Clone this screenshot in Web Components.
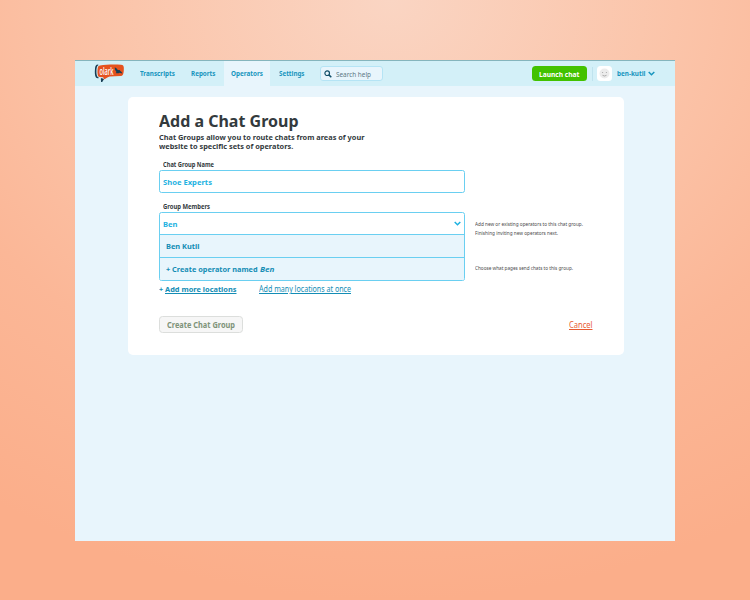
<!DOCTYPE html>
<html lang="en">
<head>
<meta charset="utf-8">
<title>Add a Chat Group</title>
<style>
html,body{margin:0;height:100%}
body{font-family:"Noto Sans","Open Sans",sans-serif;overflow:hidden}
</style>
</head>
<body>
<ol-app></ol-app>
<script>
const define = (name, html, ready) => customElements.define(name, class extends HTMLElement {
  connectedCallback() {
    if (this.shadowRoot) return;
    const t = document.createElement('template');
    t.innerHTML = html;
    this.attachShadow({mode:'open'}).appendChild(t.content.cloneNode(true));
    if (ready) ready(this);
  }
});

/* Text condensed so that its longest line spans the width given in "w". */
define('ol-text', `<style>
:host{display:block;white-space:pre;flex:none;line-height:10px}
span{display:inline-block;vertical-align:top;transform-origin:0 50%}
:host([u]) span{text-decoration:underline;text-underline-offset:1px;text-decoration-thickness:.7px}
</style><span><slot></slot></span>`, el => {
  el.style.fontSize = el.getAttribute('size') + 'px';
  const w = +el.getAttribute('w'), span = el.shadowRoot.querySelector('span');
  const natural = span.getBoundingClientRect().width;
  span.style.transform = 'scaleX(' + w / natural + ')';
  el.style.width = w + 'px';
});

define('ol-chevron', `<style>:host{display:block;flex:none;width:7px;height:5px}svg{display:block}</style>
<svg width="7" height="5" viewBox="0 0 7 5" fill="none" stroke="currentColor" stroke-width="1.5"><path d="M.7 1 3.5 3.700 6.300 1"/></svg>`);

define('ol-logo', `<style>:host{display:block;width:31px;height:19px;flex:none}svg{display:block}</style>
<svg width="31" height="19" viewBox="0 0 31 19">
<path d="M4.200.6C1.600.8 1.200 2.200 1 4.800c-.4 3-.2 7 .8 8.500.5.8 1.500 1 2.800 1z" fill="#173d55"/>
<path d="M4.600 1C3.100 1.700 2.700 3 2.500 5c-.2 2.600-.1 6 .7 7.600l1.800.8z" fill="#d4f0f8"/>
<path d="M7.300 14.600l.3 3.400 1.900-2.700z" fill="#173d55" stroke="#173d55"/>
<path d="M6 1.400C12 .6 20 .4 27 .8c2 .2 2.700 1 2.800 2.800.1 2.400 0 4.500-.6 6.400-.5 1.500-1.300 2-3 2.100l-10.400.5c-2 .2-3.500 2.200-6.400 3 .5-1 .4-1.800-.4-2.400l-3.200-.1C4.300 13 3.800 12 3.600 10c-.2-2.200-.2-4.500.2-6.300.3-1.500 1-2.100 2.200-2.300z" fill="#e5521f"/>
<text x="5.500" y="11" font-family="Open Sans,Noto Sans,sans-serif" font-size="10" font-weight="600" fill="#fff" textLength="14" lengthAdjust="spacingAndGlyphs">olark</text>
<path d="M20.800 3.200c1.700.8 2.300 1.800 3.300 3 1-.3 2 .1 2.200.9 1.100.7 1.600 1.300 2 2.300l-2.600-.7c-1.500.7-2.700.7-4 .2l.8-.9c-1.100-1.200-1.800-2.800-1.700-4.800z" fill="#173d55"/>
</svg>`);

define('ol-tab', `<style>
:host{display:flex;align-items:center;box-sizing:border-box;height:26px;flex:none;color:#1795be;font-weight:700}
:host([active]){background:#e8f5fc}
</style><slot></slot>`);

define('ol-search', `<style>
:host{display:flex;box-sizing:border-box;align-items:center;width:63px;height:15px;border:1px solid #b5e4f5;border-radius:3px;background:#e8f5fc;color:#5b7884;padding-left:3.500px;gap:4px;flex:none}
</style><svg width="8" height="8" viewBox="0 0 8 8" fill="none" stroke="#124f69" stroke-width="1.200"><circle cx="3.200" cy="3.200" r="2.300"/><path d="M4.900 4.900 7.300 7.300" stroke-width="1.500"/></svg>
<slot></slot>`);

define('ol-header', `<style>
:host{display:flex;align-items:center;box-sizing:border-box;height:26.400px;border-top:1px solid #85b5bd;background:#d3f0f8;padding:0 20px 0 19px}
.nav{display:flex;margin-left:8px;flex:none}
ol-search{margin-left:7.500px}
.launch{display:flex;align-items:center;justify-content:center;margin-left:auto;width:55px;height:15px;border-radius:3.500px;background:#42c200;color:#fff;font-weight:700}
.rule{width:1px;height:14px;background:#bfe3ee;margin:0 4px 0 5px}
.avatar{display:flex;width:15px;height:15px;border-radius:3.500px;background:#fff}
.user{display:flex;align-items:center;color:#1795be;font-weight:700;gap:3px;margin-left:5px}
</style>
<ol-logo></ol-logo>
<div class="nav">
<ol-tab style="padding:0 8px 0 7px"><ol-text size="6.800" w="35">Transcripts</ol-text></ol-tab>
<ol-tab style="padding:0 8px"><ol-text size="6.800" w="24.500">Reports</ol-text></ol-tab>
<ol-tab active style="padding:0 7px"><ol-text size="6.800" w="32">Operators</ol-text></ol-tab>
<ol-tab style="padding:0 8px 0 9px"><ol-text size="6.800" w="25.500">Settings</ol-text></ol-tab>
</div>
<ol-search><ol-text size="7.200" w="35">Search help</ol-text></ol-search>
<div class="launch"><ol-text size="7.200" w="40.500">Launch chat</ol-text></div>
<div class="rule"></div>
<div class="avatar"><svg width="15" height="15" viewBox="0 0 15 15"><circle cx="7.500" cy="7.500" r="5" fill="#ececec"/><g fill="#a5a5a5"><circle cx="5.600" cy="6.500" r=".6"/><circle cx="9.400" cy="6.500" r=".6"/></g><path d="M5.500 9.300Q7.500 10.700 9.500 9.300" fill="none" stroke="#999" stroke-width=".8"/></svg></div>
<div class="user"><ol-text size="7" w="28.500">ben-kutil</ol-text><ol-chevron></ol-chevron></div>`);

define('ol-field', `<style>
:host{display:block;width:305.500px}
.label{padding-left:4px;color:#333a3d;font-weight:700;height:10px}
.box{box-sizing:border-box;border:1px solid #6acff1;border-radius:2.500px;overflow:hidden;color:#1eb2e1;font-weight:700}
.value{display:flex;align-items:center;justify-content:space-between;height:21px;padding:0 3px}
</style><div class="label"><slot name="label"></slot></div>
<div class="box"><div class="value"><slot></slot></div><slot name="options"></slot></div>`);

define('ol-option', `<style>
:host{display:flex;align-items:center;height:22px;border-top:1px solid #6acff1;background:#e8f5fc;padding-left:6px;color:#148db5;font-weight:700}
</style><slot></slot>`);

define('ol-card', `<style>
:host{display:block;box-sizing:border-box;width:496.500px;height:257.500px;margin:11.100px 0 0 52.500px;padding:14px 32px 0 31.700px;border-radius:5px;background:#fff;color:#333a3d;overflow:hidden}
.title{font-weight:700;height:22px}.title ol-text{line-height:20px}
.sub{font-weight:700}.sub ol-text{line-height:8.300px}
.body{display:grid;grid-template-columns:305.500px 1fr;column-gap:10.500px;margin-top:10px}
.fields{display:flex;flex-direction:column;gap:9px}
.hints{color:#4a4a4a;padding-top:60px}.hints ol-text{line-height:9.400px}
.hints .last{margin-top:25px}
.links{display:flex;color:#148db5;margin-top:3px}
.actions{display:flex;justify-content:space-between;align-items:center;margin-top:22px}
.create{display:flex;box-sizing:border-box;align-items:center;justify-content:center;width:84.300px;height:17px;border:1px solid #dcdedc;border-radius:3.500px;background:#f6f6f6;color:#7e9379;font-weight:700}
.cancel{color:#e85b32}
</style>
<div class="title"><ol-text size="16.800" w="139.500">Add a Chat Group</ol-text></div>
<div class="sub"><ol-text size="7.800" w="205.500">Chat Groups allow you to route chats from areas of your
website to specific sets of operators.</ol-text></div>
<div class="body"><div class="fields">
<ol-field><ol-text slot="label" size="6.100" w="51">Chat Group Name</ol-text><ol-text size="7.800" w="49">Shoe Experts</ol-text></ol-field>
<ol-field><ol-text slot="label" size="6.100" w="47">Group Members</ol-text><ol-text size="7.800" w="14.500">Ben</ol-text><ol-chevron></ol-chevron>
<ol-option slot="options"><ol-text size="7.800" w="33.500">Ben Kutil</ol-text></ol-option>
<ol-option slot="options"><ol-text size="7.800" w="93.500">+ Create operator named </ol-text><ol-text size="7.800" w="14.500" style="font-style:italic">Ben</ol-text></ol-option>
</ol-field></div>
<div class="hints"><ol-text size="5.600" w="108">Add new or existing operators to this chat group.</ol-text><ol-text size="5.600" w="83">Finishing inviting new operators next.</ol-text><ol-text class="last" size="5.600" w="98">Choose what pages send chats to this group.</ol-text></div>
</div>
<div class="links"><ol-text size="7.800" w="6" style="font-weight:700">+ </ol-text><ol-text u size="7.800" w="71.500" style="font-weight:700">Add more locations</ol-text><ol-text u size="8" w="92" style="margin-left:22.500px">Add many locations at once</ol-text></div>
<div class="actions"><div class="create"><ol-text size="8" w="68">Create Chat Group</ol-text></div><ol-text class="cancel" u size="8" w="23.500">Cancel</ol-text></div>`);

define('ol-app', `<style>
:host{display:flex;box-sizing:border-box;width:750px;height:600px;padding:60px 75px;background:radial-gradient(ellipse 720px 600px at 52% 0,#fad5c3 0,#fbc4a9 40%,#fbb797 68%,#fbae8a 100%)}
.window{width:600px;height:480.500px;background:#e8f5fc;flex:none}
</style><div class="window"><ol-header></ol-header><ol-card></ol-card></div>`);
</script>
</body>
</html>
